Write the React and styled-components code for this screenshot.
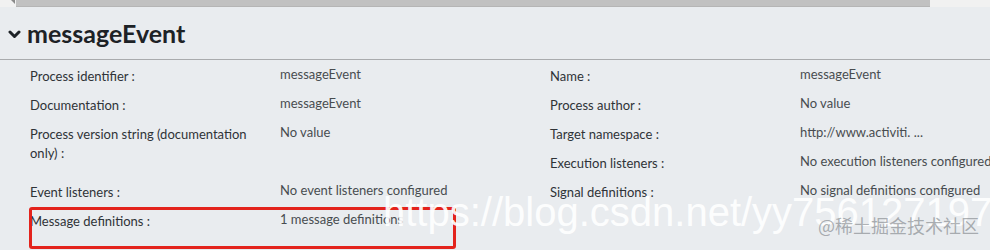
import React from "react";
import styled, { createGlobalStyle } from "styled-components";

const GlobalStyle = createGlobalStyle`
  html, body {
    margin: 0;
    padding: 0;
    background: #e9ecef;
  }
`;

const Page = styled.div`
  position: relative;
  width: 990px;
  height: 250px;
  overflow: hidden;
  background: #e9ecef;
  font-family: Lato, "Open Sans", sans-serif;
  color: #333;
`;

const ScrollStrip = styled.div`
  display: flex;
  height: 7px;
  background: #f1f1f1;
`;

const ScrollCorner = styled.div`
  position: relative;
  width: 16px;
  height: 100%;
  background: #f1f1f1;

  &::after {
    content: "";
    position: absolute;
    right: 1px;
    top: 0;
    border-left: 4px solid transparent;
    border-top: 4px solid #8a8a8a;
  }
`;

const ScrollThumb = styled.div`
  width: 914px;
  height: 6px;
  background: #c1c1c1;
  border-bottom: 1px solid #b5b5b5;
`;

const Header = styled.div`
  display: flex;
  align-items: center;
  gap: 6px;
  height: 53px;
  padding-left: 8px;
  border-bottom: 1px solid #a9abad;
  box-sizing: border-box;
`;

const Chevron = styled.svg`
  width: 13px;
  height: 9px;
  margin-top: 3px;
`;

const Title = styled.h1`
  margin: 0;
  font-size: 25px;
  font-weight: 700;
  color: #1d2226;
`;

const PropertyGrid = styled.div`
  display: grid;
  grid-template-columns: 520px 520px;
  grid-auto-rows: 29px;
  padding-left: 30px;
  padding-top: 2px;
`;

const Property = styled.div`
  display: grid;
  grid-template-columns: 250px 270px;
  grid-row: span ${({ $rows }) => $rows || 1};
`;

const Label = styled.div`
  padding: 5px 22px 0 0;
  font-size: 13px;
  line-height: 19px;
  color: #2f3337;
`;

const Value = styled.div`
  padding-top: 3px;
  font-size: 13px;
  line-height: 19px;
  color: #484c50;
  white-space: nowrap;
`;

const Highlight = styled.div`
  position: absolute;
  left: 29px;
  top: 207px;
  width: 421px;
  height: 36px;
  border: 3px solid #e3231c;
  border-radius: 3px;
`;

const Watermark = styled.div`
  position: absolute;
  left: 383px;
  top: 192px;
  font-family: "Liberation Sans", Arial, sans-serif;
  font-size: 40px;
  line-height: 40px;
  color: rgba(255, 255, 255, 0.92);
  white-space: nowrap;
`;

const SiteMark = styled.div`
  position: absolute;
  left: 818px;
  top: 214px;
  font-family: "Noto Sans CJK SC", "Noto Sans", sans-serif;
  font-size: 18px;
  line-height: 22px;
  color: rgba(110, 115, 120, 0.55);
  white-space: nowrap;
`;

const properties = [
  { label: "Process identifier :", value: "messageEvent" },
  { label: "Name :", value: "messageEvent" },
  { label: "Documentation :", value: "messageEvent" },
  { label: "Process author :", value: "No value" },
  { label: "Process version string (documentation only) :", value: "No value", rows: 2 },
  { label: "Target namespace :", value: "http://www.activiti. ..." },
  { label: "Execution listeners :", value: "No execution listeners configured" },
  { label: "Event listeners :", value: "No event listeners configured" },
  { label: "Signal definitions :", value: "No signal definitions configured" },
  { label: "Message definitions :", value: "1 message definitions" },
];

export default function App() {
  return (
    <>
      <GlobalStyle />
      <Page>
        <ScrollStrip>
          <ScrollCorner />
          <ScrollThumb />
        </ScrollStrip>
        <Header>
          <Chevron viewBox="0 0 13 9">
            <path
              d="M2 2 L6.5 6.5 L11 2"
              fill="none"
              stroke="#1d2226"
              strokeWidth="3"
              strokeLinecap="round"
              strokeLinejoin="round"
            />
          </Chevron>
          <Title>messageEvent</Title>
        </Header>
        <PropertyGrid>
          {properties.map((p) => (
            <Property key={p.label} $rows={p.rows}>
              <Label>{p.label}</Label>
              <Value>{p.value}</Value>
            </Property>
          ))}
        </PropertyGrid>
        <Highlight />
        <Watermark>https://blog.csdn.net/yy756127197</Watermark>
        <SiteMark>@稀土掘金技术社区</SiteMark>
      </Page>
    </>
  );
}
